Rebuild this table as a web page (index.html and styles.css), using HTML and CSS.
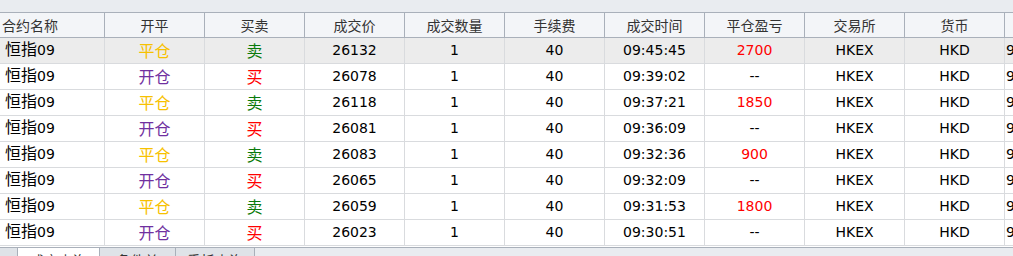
FILE: index.html
```html
<!DOCTYPE html>
<html lang="zh">
<head>
<meta charset="utf-8">
<title>成交查询</title>
<link rel="stylesheet" href="styles.css">
</head>
<body>
<div class="top-strip"></div>
<table class="grid">
  <colgroup>
    <col class="c-first"><col class="c"><col class="c"><col class="c"><col class="c"><col class="c"><col class="c"><col class="c"><col class="c"><col class="c"><col class="c">
  </colgroup>
  <thead>
    <tr>
      <th class="first">合约名称</th><th>开平</th><th>买卖</th><th>成交价</th><th>成交数量</th><th>手续费</th><th>成交时间</th><th>平仓盈亏</th><th>交易所</th><th>货币</th><th></th>
    </tr>
  </thead>
  <tbody>
    <tr class="sel"><td class="first"><span class="cn">恒指</span>09</td><td class="cn close">平仓</td><td class="cn sell">卖</td><td>26132</td><td>1</td><td>40</td><td>09:45:45</td><td class="pnl">2700</td><td>HKEX</td><td>HKD</td><td class="last">9</td></tr>
    <tr><td class="first"><span class="cn">恒指</span>09</td><td class="cn open">开仓</td><td class="cn buy">买</td><td>26078</td><td>1</td><td>40</td><td>09:39:02</td><td>--</td><td>HKEX</td><td>HKD</td><td class="last">9</td></tr>
    <tr><td class="first"><span class="cn">恒指</span>09</td><td class="cn close">平仓</td><td class="cn sell">卖</td><td>26118</td><td>1</td><td>40</td><td>09:37:21</td><td class="pnl">1850</td><td>HKEX</td><td>HKD</td><td class="last">9</td></tr>
    <tr><td class="first"><span class="cn">恒指</span>09</td><td class="cn open">开仓</td><td class="cn buy">买</td><td>26081</td><td>1</td><td>40</td><td>09:36:09</td><td>--</td><td>HKEX</td><td>HKD</td><td class="last">9</td></tr>
    <tr><td class="first"><span class="cn">恒指</span>09</td><td class="cn close">平仓</td><td class="cn sell">卖</td><td>26083</td><td>1</td><td>40</td><td>09:32:36</td><td class="pnl">900</td><td>HKEX</td><td>HKD</td><td class="last">9</td></tr>
    <tr><td class="first"><span class="cn">恒指</span>09</td><td class="cn open">开仓</td><td class="cn buy">买</td><td>26065</td><td>1</td><td>40</td><td>09:32:09</td><td>--</td><td>HKEX</td><td>HKD</td><td class="last">9</td></tr>
    <tr><td class="first"><span class="cn">恒指</span>09</td><td class="cn close">平仓</td><td class="cn sell">卖</td><td>26059</td><td>1</td><td>40</td><td>09:31:53</td><td class="pnl">1800</td><td>HKEX</td><td>HKD</td><td class="last">9</td></tr>
    <tr><td class="first"><span class="cn">恒指</span>09</td><td class="cn open">开仓</td><td class="cn buy">买</td><td>26023</td><td>1</td><td>40</td><td>09:30:51</td><td>--</td><td>HKEX</td><td>HKD</td><td class="last">9</td></tr>
  </tbody>
</table>
<div class="tabbar">
  <div class="tab stub"></div>
  <div class="tab active">成交查询</div>
  <div class="tab w-mid">条件单</div>
  <div class="tab w-last">委托查询</div>
  <div class="tab-rest"></div>
</div>
</body>
</html>
```
FILE: styles.css
```css
html, body {
  margin: 0;
  padding: 0;
  background: #ffffff;
  overflow: hidden;
  width: 1013px;
  height: 256px;
}
body {
  font-family: "DejaVu Sans", "Noto Sans CJK SC", sans-serif;
  font-size: 14px;
  color: #000;
}
.top-strip {
  height: 12px;
  background: #e9ecf0;
}
.grid {
  border-collapse: separate;
  border-spacing: 0;
  table-layout: fixed;
  width: 1105px;
}
.c-first { width: 105px; }
.c { width: 100px; }
.grid th {
  font-family: "Noto Sans CJK SC", sans-serif;
  font-weight: normal;
  font-size: 14px;
  color: #333;
  background: #f3f5f8;
  line-height: 24px;
  height: 24px;
  padding: 0;
  border-top: 1px solid #a9b0ba;
  border-bottom: 1px solid #a9b0ba;
  border-right: 1px solid #a9b0ba;
  text-align: center;
  white-space: nowrap;
  overflow: hidden;
}
.grid th.first {
  text-align: left;
  padding-left: 2px;
}
.grid td {
  line-height: 25px;
  height: 25px;
  padding: 0;
  border-bottom: 1px solid #d9dbde;
  border-right: 1px solid #d9dbde;
  text-align: center;
  white-space: nowrap;
  overflow: hidden;
  vertical-align: middle;
}
.grid td.first {
  text-align: left;
  padding-left: 5px;
}
.grid td.last {
  text-align: left;
  padding-left: 1px;
}
.grid tr.sel td {
  background: #ececec;
}
.cn {
  font-family: "Noto Sans CJK SC", sans-serif;
  font-size: 16px;
}
span.cn {
  line-height: 16px;
}
.close { color: #f7c100; }
.open { color: #7030a0; }
.sell { color: #0a7a0a; }
.buy { color: #ff0000; }
.pnl { color: #ff0000; }

.tabbar {
  display: flex;
  height: 8px;
  border-top: 1px solid #a9b0ba;
  margin-top: 1px;
  background: #e9ecf0;
  overflow: hidden;
}
.tab {
  box-sizing: border-box;
  height: 20px;
  border-right: 1px solid #a9b0ba;
  background: #dfe3e8;
  font-family: "Noto Sans CJK SC", sans-serif;
  font-size: 14px;
  color: #333;
  text-align: center;
  line-height: 20px;
  padding-top: 2px;
  white-space: nowrap;
}
.stub { width: 18px; }
.active { width: 82px; background: #ffffff; }
.w-mid { width: 76px; }
.w-last { width: 79px; }
.tab-rest { flex: 1; }
```
